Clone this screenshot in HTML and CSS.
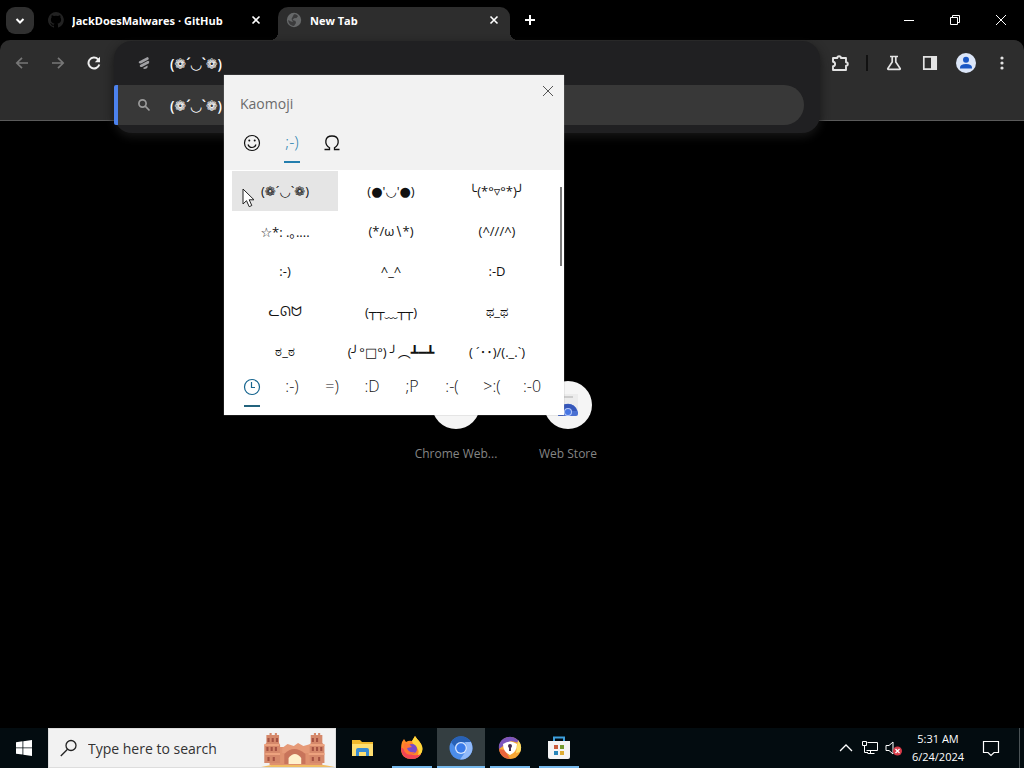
FILE: index.html
```html
<!DOCTYPE html>
<html lang="en">
<head>
<meta charset="utf-8">
<title>New Tab</title>
<link rel="stylesheet" href="styles.css">
</head>
<body>
<div class="desktop">
  <main class="browser">
    <header class="tabstrip">
      <button class="tab-search" aria-label="Search tabs"><svg width="12" height="12" viewBox="0 0 12 12" fill="none" stroke="#fff" stroke-width="2"><path d="M2.500 4 6 7.500 9.500 4"/></svg></button>
      <div class="tab">
        <svg class="tab-icon" width="16" height="16" viewBox="0 0 16 16" fill="#222"><path d="M8 0a8 8 0 0 0-2.500 15.600c.4 0 .5-.2.5-.4v-1.500c-2.200.5-2.700-1-2.700-1-.4-.9-.9-1.200-.9-1.200-.7-.5.100-.5.100-.5.8.100 1.200.8 1.200.8.700 1.300 1.900.9 2.300.7.100-.5.300-.9.500-1.100-1.800-.2-3.600-.9-3.600-4 0-.9.300-1.600.8-2.100-.1-.2-.4-1 .1-2.100 0 0 .7-.2 2.200.8a7.500 7.500 0 0 1 4 0c1.500-1 2.200-.8 2.200-.8.500 1.100.2 1.900.1 2.100.5.600.8 1.300.8 2.100 0 3.100-1.900 3.800-3.700 4 .3.200.6.700.6 1.500v2.200c0 .2.100.5.600.4A8 8 0 0 0 8 0z"/></svg>
        <a class="tab-title" href="#">JackDoesMalwares · GitHub</a>
        <button class="tab-close" aria-label="Close tab"><svg width="10" height="10" viewBox="0 0 10 10" stroke="#fff" stroke-width="1.600"><path d="M1.500 1.500l7 7M8.500 1.500l-7 7"/></svg></button>
      </div>
      <div class="tab active">
        <svg class="tab-icon" width="16" height="16" viewBox="0 0 16 16"><circle cx="8" cy="8" r="7.200" fill="#666869"/><path d="M8 2.200c2 0 3 .6 4 2L10.500 6 8 6.200 6.500 8l3 1 .5 2-2 3C4 13.500 2.300 11 2.200 8L5 9.500l2 .5-1.500-3L7 4z" fill="#3b3b3c"/></svg>
        <a class="tab-title" href="#">New Tab</a>
        <button class="tab-close" aria-label="Close tab"><svg width="10" height="10" viewBox="0 0 10 10" stroke="#fff" stroke-width="1.600"><path d="M1.500 1.500l7 7M8.500 1.500l-7 7"/></svg></button>
      </div>
      <button class="new-tab" aria-label="New tab"><svg width="12" height="12" viewBox="0 0 12 12" stroke="#fff" stroke-width="2"><path d="M6 1v10M1 6h10"/></svg></button>
      <div class="window-controls">
        <button aria-label="Minimize"><svg width="10" height="10" viewBox="0 0 10 10" stroke="#fff"><path d="M0 5.500h10"/></svg></button>
        <button aria-label="Restore"><svg width="10" height="10" viewBox="0 0 10 10" stroke="#fff" fill="none"><path d="M.5 2.500h7v7h-7zM2.500 2.500v-2h7v7h-2"/></svg></button>
        <button aria-label="Close"><svg width="12" height="12" viewBox="0 0 12 12" stroke="#fff"><path d="M1 1l10 10M11 1L1 11"/></svg></button>
      </div>
    </header>

    <div class="chrome">
      <div class="toolbar">
        <button class="tool" aria-label="Back"><svg width="14" height="14" viewBox="0 0 14 14" fill="none" stroke="#777" stroke-width="1.700"><path d="M13 7H2M7 1.800 1.800 7 7 12.200"/></svg></button>
        <button class="tool" aria-label="Forward"><svg width="14" height="14" viewBox="0 0 14 14" fill="none" stroke="#777" stroke-width="1.700"><path d="M1 7h11M7 1.800 12.200 7 7 12.200"/></svg></button>
        <button class="tool" aria-label="Reload"><svg width="14" height="14" viewBox="0 0 14 14" fill="none" stroke="#eee" stroke-width="2"><path d="M12.300 8.500A5.500 5.500 0 1 1 11 3.200L12 4.300"/><path d="M13 .8v5.400H7.800z" fill="#eee" stroke="none"/></svg></button>
        <div class="omnibox-slot">
          <div class="omnibox">
            <label class="omni-row">
              <svg width="16" height="16" viewBox="0 0 16 16" fill="#a0a0a4"><path d="M3 6.500 11.500 2q2 .6 1 2.400L5 8.400Q2 8.600 3 6.500zM4 10l8-4.200q2 .5 1 2.400L6 12q-3 0-2-2zM7 13l4.500-2.400q.8 1.800-1 3-2.500 1.200-3.500-.6z"/></svg>
              <input class="omni-text" aria-label="Address and search bar" value="(❁´◡`❁)">
            </label>
            <a class="omni-row suggestion" href="#">
              <svg width="16" height="16" viewBox="0 0 16 16" fill="none" stroke="#9b9b9b" stroke-width="1.700"><circle cx="6.500" cy="6.500" r="3.600"/><path d="M9.200 9.200l4.300 4.300"/></svg>
              <span class="omni-text">(❁´◡`❁)</span>
            </a>
          </div>
        </div>
        <button class="tool" aria-label="Extensions"><svg width="18" height="18" viewBox="0 0 18 18" fill="none" stroke="#e3e3e3" stroke-width="1.900"><path d="M2 4h4.300a1.800 1.800 0 0 1 3.600 0H15v4.200a1.800 1.800 0 0 1 0 3.600V16H2v-3.700c2.800-.2 2.800-4.400 0-4.600z" stroke-linejoin="round"/></svg></button>
        <span class="divider"></span>
        <button class="tool" aria-label="Experiments"><svg width="16" height="16" viewBox="0 0 16 16" fill="none" stroke="#e3e3e3" stroke-width="1.700"><path d="M4 1.500h8M6.200 2v5L1.800 13.500q-.2.800.5.800h11.400q.7 0 .5-.8L9.800 7V2"/></svg></button>
        <button class="tool" aria-label="Side panel"><svg width="16" height="16" viewBox="0 0 16 16"><path d="M1.800 1.800h12.400v12.400H1.800z" fill="none" stroke="#e3e3e3" stroke-width="1.700"/><path d="M9 2h5v12H9z" fill="#e3e3e3"/></svg></button>
        <button class="tool" aria-label="Profile"><svg width="20" height="20" viewBox="0 0 20 20"><circle cx="10" cy="10" r="10" fill="#dce6f8"/><circle cx="10" cy="6.800" r="3" fill="#1a57c4"/><path d="M4 14.500q0-3.500 6-3.500t6 3.500v1H4z" fill="#1a57c4"/></svg></button>
        <button class="tool" aria-label="Menu"><svg width="4" height="16" viewBox="0 0 4 16" fill="#e3e3e3"><circle cx="2" cy="3" r="1.600"/><circle cx="2" cy="8" r="1.600"/><circle cx="2" cy="13" r="1.600"/></svg></button>
      </div>
      <div class="bookmarks"></div>
    </div>

    <section class="page">
      <nav class="shortcuts">
        <a class="shortcut" href="#"><span class="bubble"></span><span>Chrome Web...</span></a>
        <a class="shortcut" href="#"><span class="bubble"><svg width="24" height="24" viewBox="0 0 24 24"><path d="M2 1h20v20q0 2-2 2H4q-2 0-2-2z" fill="#ececec"/><path d="M7 3h10v2H7z" fill="#ccc"/><path d="M2 23a10 10 0 0 1 20-4v2q0 2-2 2z" fill="#4a70d2"/><path d="M2 18q3-8 10-7 7 0 9 7H12q-4 0-5 5H4q-2 0-2-2z" fill="#3657b9"/><circle cx="12" cy="19" r="4" fill="#b6c9fa"/><circle cx="12" cy="19" r="3" fill="#4776e3"/></svg></span><span>Web Store</span></a>
      </nav>
    </section>
  </main>

  <aside class="picker" aria-label="Kaomoji picker">
    <header class="picker-head">
      <div class="picker-title"><h1>Kaomoji</h1><button class="picker-close" aria-label="Close"><svg width="12" height="12" viewBox="0 0 12 12" stroke="#555"><path d="M1 1l10 10M11 1L1 11"/></svg></button></div>
      <div class="modes">
        <button aria-label="Emoji"><svg width="18" height="18" viewBox="0 0 18 18" fill="none" stroke="#111" stroke-width="1.200"><circle cx="9" cy="9" r="7.500"/><path d="M5 10.500q1 3 4 3t4-3"/><circle cx="6.300" cy="6.500" r="1" fill="#111" stroke="none"/><circle cx="11.700" cy="6.500" r="1" fill="#111" stroke="none"/></svg></button>
        <button class="selected">;-)</button>
        <button aria-label="Symbols"><svg width="18" height="18" viewBox="0 0 18 18" fill="none" stroke="#111" stroke-width="1.300"><path d="M1.500 15.500h5v-1.800C1.200 10.500 1.300 2 9 2s7.800 8.500 2.500 11.700v1.800h5"/></svg></button>
      </div>
    </header>
    <div class="faces">
      <button class="hovered">(❁´◡`❁)</button><button>(●'◡'●)</button><button>╰(*°▿°*)╯</button>
      <button>☆*: .｡....</button><button>(*/ω∖*)</button><button>(^///^)</button>
      <button>:-)</button><button>^_^</button><button>:-D</button>
      <button>ᓚᘏᗢ</button><button>(┬┬﹏┬┬)</button><button>ಥ_ಥ</button>
      <button>ಠ_ಠ</button><button>(╯°□°) ╯︵┻━┻</button><button>( ´･･)/(._.`)</button>
    </div>
    <div class="categories">
      <button class="selected" aria-label="Recent"><svg width="18" height="18" viewBox="0 0 18 18" fill="none" stroke="#16658f" stroke-width="1.200"><circle cx="9" cy="9" r="7.500"/><path d="M8.500 4v5.500H12"/></svg></button>
      <button>:-)</button><button>=)</button><button>:D</button><button>;P</button><button>:-(</button><button>&gt;:(</button><button>:-0</button>
    </div>
    <span class="scroll-thumb"></span>
    <svg class="cursor" width="14" height="20" viewBox="0 0 14 20"><path d="M1 1v15l3.500-3.300 2.700 6 2.600-1.200-2.600-5.700h4.800z" fill="#fff" stroke="#222"/></svg>
  </aside>

  <footer class="taskbar">
    <button class="start" aria-label="Start"><svg width="16" height="16" viewBox="0 0 16 16" fill="#fff"><path d="M0 2.200 6.500 1.300v6.200H0zM7.300 1.200 16 0v7.500H7.300zM0 8.300h6.500v6.300L0 13.700zM7.300 8.300H16V16l-8.700-1.200z"/></svg></button>
    <label class="search">
      <svg width="18" height="18" viewBox="0 0 18 18" fill="none" stroke="#222" stroke-width="1.300"><circle cx="11" cy="6.500" r="5"/><path d="M7.500 10.200.8 17"/></svg>
      <input placeholder="Type here to search" aria-label="Type here to search">
      <svg class="fort" width="76" height="38" viewBox="0 0 72 38" preserveAspectRatio="none">
        <path d="M2 38q33-8 70 0z" fill="#f0bd62"/>
        <path d="M10 36V18h50v18z" fill="#df916f"/>
        <path d="M22 19l5-4 6 2 4-3 5 3 7-2 3 4v5H22z" fill="#e69a78"/>
        <path d="M7 6h3V4h2v2h3V4h2v2h2v8l1 2v18H5V16l2-2zM49 6h3V4h2v2h2V4h2v2h2v8l2 2v18H48V16l1-2z" fill="#d5886a"/>
        <path d="M5 15h14v2H5zM48 15h14v2H48zM6 24h14v2H6zM47 24h15v2H47z" fill="#eda37f"/>
        <g fill="#a45142"><path d="M8 9h2v4H8zM12 9h2v4h-2zM16 9h2v4h-2zM50 9h2v4h-2zM54 9h2v4h-2zM7 18h2v4H7zM11 18h2v4h-2zM15 18h2v4h-2zM50 18h2v4h-2zM54 18h2v4h-2zM58 18h2v4h-2zM8 28h2v4H8zM13 28h2v4h-2zM50 28h2v4h-2zM56 28h2v4h-2z"/></g>
        <path d="M24 35V25q9-10 20 0v10z" fill="#c8745b"/><path d="M28 35v-6q6-8 12 0v6z" fill="#fff1cd"/>
      </svg>
    </label>
    <nav class="apps">
      <button aria-label="File Explorer"><svg width="24" height="24" viewBox="0 0 24 24"><path d="M1 4h8l2 2h11v14H1z" fill="#f1b92d"/><path d="M1 8h21v12H1z" fill="#ffdf70"/><path d="M5 20v-6q0-2 2-2h9q2 0 2 2v6h-3v-4H8v4z" fill="#398bd2"/></svg></button>
      <button class="running" aria-label="Firefox"><svg width="24" height="24" viewBox="0 0 24 24"><path d="M2 6l2-3 2 3q3-2 6-1l3-5q2 3 4 5 4 5 3 10-2 8-10 8Q1 23 1 13q0-4 1-7z" fill="#ff8a24"/><path d="M15 0q2 3 4 5 5 6 3 11-2 4-5 5 4-7-2-11-3-3-3-5z" fill="#ffd83b"/><path d="M1 11q0 12 11 12 6 0 9-5-7 3-12-1z" fill="#f24455"/><circle cx="12" cy="13" r="5" fill="#794cc9"/><path d="M4 7l5 1 3 3-5 1q1 5 8 4-3 4-8 2-5-3-3-11z" fill="#ff7534"/></svg></button>
      <button class="running active" aria-label="Chromium"><svg width="24" height="24" viewBox="0 0 24 24"><circle cx="12" cy="12" r="11.500" fill="#4c8de9"/><path d="M2 6A11.500 11.500 0 0 1 22 6H12q-5 0-6 5z" fill="#2861b5"/><path d="M22 6q4 9-3 15-3 3-8 2.500L17 15q2-4-1-9z" fill="#91bafa"/><circle cx="12" cy="12" r="6" fill="#d5e3fc"/><circle cx="12" cy="12" r="4.700" fill="#397bea"/></svg></button>
      <button class="running" aria-label="Secure Browser"><svg width="24" height="24" viewBox="0 0 24 24"><circle cx="12" cy="12" r="11" fill="#f6a635"/><path d="M1 13Q0 7 5 3q8-5 15 1l2 3-9-2-8 5z" fill="#7c55bd"/><path d="M1 13q1 9 11 10L7 14z" fill="#ea653b"/><path d="M20 4q5 6 2 12l-4 1z" fill="#ffe06b"/><path d="M5 8q7-5 14 0 0 8-7 11Q5 16 5 8z" fill="#fff"/><circle cx="12" cy="10" r="2" fill="#472e52"/><path d="M11 10h2v5h-2z" fill="#472e52"/></svg></button>
      <button class="running" aria-label="Microsoft Store"><svg width="24" height="24" viewBox="0 0 24 24"><path d="M7 6V1.500h10V6" fill="none" stroke="#3d9fdd" stroke-width="2"/><path d="M1 5h22v16q0 2-2 2H3q-2 0-2-2z" fill="#f4f4f4"/><path d="M7 9h4v4H7z" fill="#c95b3b"/><path d="M13 9h4v4h-4z" fill="#73992f"/><path d="M7 15h4v4H7z" fill="#2785b9"/><path d="M13 15h4v4h-4z" fill="#ddac32"/></svg></button>
    </nav>
    <div class="tray">
      <button aria-label="Show hidden icons"><svg width="14" height="14" viewBox="0 0 14 14" fill="none" stroke="#fff" stroke-width="1.300"><path d="M1 10l6-6 6 6"/></svg></button>
      <button aria-label="Network"><svg width="18" height="16" viewBox="0 0 18 16" fill="none" stroke="#fff"><path d="M6.500 2.500h10v8H5.500M9.500 10.500v3M6.500 13.500h7M1.500 1.500h4v4h-4zM3.500 5.500v7H7"/></svg></button>
      <button aria-label="Volume muted"><svg width="18" height="16" viewBox="0 0 18 16"><path d="M1 5.500h3L8 2v12l-4-3.500H1z" fill="none" stroke="#fff"/><circle cx="12.500" cy="11" r="4.500" fill="#d83a48"/><path d="M10.500 9l4 4M14.500 9l-4 4" stroke="#fff" stroke-width="1.200"/></svg></button>
      <button class="clock"><time>5:31 AM</time><time>6/24/2024</time></button>
      <button class="notices" aria-label="Notifications"><svg width="18" height="18" viewBox="0 0 18 18" fill="none" stroke="#fff" stroke-width="1.200"><path d="M1.500 2.500h15v11H12l-3 3-3-3H1.500z"/></svg></button>
      <button class="show-desktop" aria-label="Show desktop"></button>
    </div>
  </footer>
</div>
</body>
</html>
```
FILE: styles.css
```css
* { box-sizing: border-box; }
body { margin: 0; background: #000; font-family: "Open Sans", "Noto Sans", "DejaVu Sans", "Noto Sans CJK JP", sans-serif; }
button, input { font: inherit; color: inherit; border: 0; padding: 0; background: none; outline: none; }
button { display: flex; align-items: center; justify-content: center; white-space: nowrap; }
a { color: inherit; text-decoration: none; }
svg { flex: none; }

.desktop { position: relative; display: flex; flex-direction: column; min-height: 100vh; }
.browser { flex: 1; display: flex; flex-direction: column; color: #fff; }

.tabstrip { display: flex; align-items: flex-end; height: 40px; padding-left: 6px; }
.tab-search { width: 28px; height: 27px; margin-bottom: 6px; border-radius: 9px; background: #303030; }
.tab { display: flex; align-items: center; width: 232px; height: 33px; margin-left: 6px; padding: 0 10px 7px 8px; font-size: 11px; font-weight: 700; }
.tab.active { position: relative; background: #2d2d2d; border-radius: 10px 10px 0 0; }
.tab.active::before, .tab.active::after { content: ""; position: absolute; bottom: 0; width: 8px; height: 8px; }
.tab.active::before { right: 100%; background: radial-gradient(circle at 0 0, #000 8px, #2d2d2d 8px); }
.tab.active::after { left: 100%; background: radial-gradient(circle at 100% 0, #000 8px, #2d2d2d 8px); }
.tab-title { flex: 1; margin-left: 8px; white-space: nowrap; overflow: hidden; }
.tab-close { width: 12px; height: 16px; }
.new-tab { width: 28px; height: 28px; margin: 0 0 6px 6px; }
.window-controls { display: flex; margin-left: auto; align-self: flex-start; }
.window-controls button { width: 46px; height: 40px; }

.chrome { background: #2d2d2d; border-bottom: 1px solid #5a5a5a; border-radius: 10px 10px 0 0; }
.toolbar { display: flex; align-items: center; height: 45px; padding: 0 4px; }
.tool { width: 36px; height: 36px; }
.bookmarks { height: 35px; }
.divider { width: 2px; height: 16px; margin: 0 8px; background: #111; }
.omnibox-slot { position: relative; flex: 1; align-self: stretch; margin: 0 2px; }
.omnibox { position: absolute; inset: 1px 0 auto 0; padding-bottom: 8px; border-radius: 18px; background: #202022; box-shadow: 0 4px 10px #161616; z-index: 1; }
.omni-row { display: flex; align-items: center; height: 44px; padding-left: 22px; gap: 18px; }
.omni-text { font-size: 14px; font-weight: 600; min-width: 0; flex: 1; }
.suggestion { height: 40px; margin-right: 16px; padding-left: 18px; border-left: 4px solid #4c82ee; border-radius: 2px 20px 20px 2px; background: #383838; }

.page { flex: 1; display: flex; justify-content: center; padding-top: 260px; }
.shortcuts { display: flex; }
.shortcut { display: flex; flex-direction: column; align-items: center; gap: 15px; width: 112px; font-size: 12px; line-height: 20px; color: #858585; }
.bubble { display: flex; align-items: center; justify-content: center; width: 48px; height: 48px; border-radius: 50%; background: #f5f5f5; }

.picker { position: absolute; left: 224px; top: 75px; width: 340px; background: #fff; color: #111; box-shadow: 0 0 1px #999; z-index: 2; }
.picker-head { background: #f2f2f2; height: 95px; padding: 0 8px; }
.picker-title { display: flex; justify-content: space-between; height: 48px; padding: 0 2px 0 8px; }
.picker-title h1 { margin: 19px 0 0; font-size: 14px; line-height: 20px; font-weight: 400; color: #6b6b6b; }
.picker-close { width: 12px; height: 32px; }
.modes, .categories { display: flex; }
.modes button, .categories button { position: relative; width: 40px; height: 40px; font-size: 16px; font-weight: 300; padding-bottom: 3px; }
.modes button:has(svg), .categories button:has(svg) { padding-bottom: 0; }
.modes .selected { color: #237eae; }
.modes .selected::after, .categories .selected::after { content: ""; position: absolute; left: 12px; right: 12px; bottom: 0; height: 2px; background: #237eae; }
.categories .selected::after { background: #23637d; }
.faces { display: grid; grid-template-columns: repeat(3, 106px); grid-auto-rows: 40px; height: 196px; margin: 1px 8px 0; overflow: hidden; }
.faces button { font-size: 13px; }
.faces .hovered { background: #e5e5e5; }
.categories { padding: 0 8px 8px; }
.scroll-thumb { position: absolute; right: 2px; top: 112px; width: 2px; height: 79px; background: #777; }
.cursor { position: absolute; left: 18px; top: 113px; }

.taskbar { display: flex; height: 40px; background: #030c10; color: #fff; }
.start { width: 48px; height: 40px; }
.search { display: flex; align-items: center; gap: 10px; width: 288px; padding: 0 0 0 11px; background: #f2f2f2; border: 1px solid #ddd; color: #333; }
.search input { flex: 1; min-width: 0; font-size: 14px; }
.search input::placeholder { color: #333; opacity: 1; }
.apps { display: flex; gap: 1px; padding-left: 3px; }
.apps button { position: relative; width: 48px; height: 40px; }
.apps .active { background: #343e41; }
.apps .running::after { content: ""; position: absolute; left: 4px; right: 4px; bottom: 0; height: 2px; background: #76b9ed; }
.apps .active::after { left: 0; right: 0; }
.tray { display: flex; margin-left: auto; }
.tray button { width: 24px; height: 40px; }
.tray .clock { flex-direction: column; width: 64px; font-size: 11px; line-height: 18px; }
.tray .notices { width: 42px; margin-right: 7px; }
.tray .show-desktop { width: 5px; border-left: 1px solid #4b5356; }
```
